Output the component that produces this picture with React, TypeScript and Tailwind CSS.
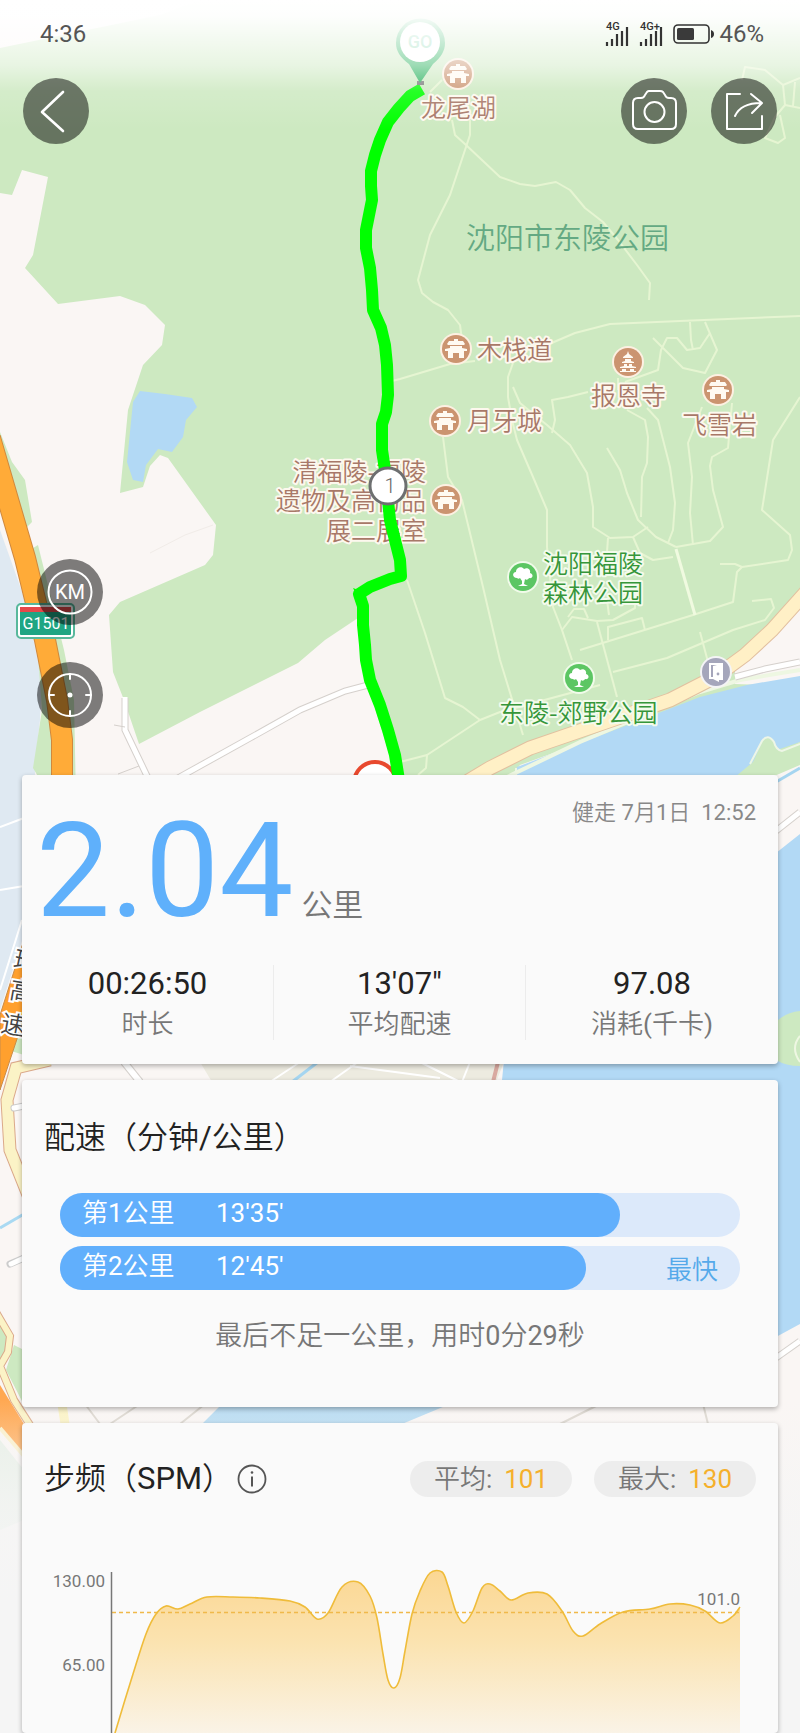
import type { ReactNode } from "react";

type Point = [number, number];

const splits = [
  { name: "第1公里", pace: "13'35'", ratio: 82.4, fastest: false },
  { name: "第2公里", pace: "12'45'", ratio: 77.3, fastest: true },
];

const stats = [
  { value: "00:26:50", label: "时长" },
  { value: "13'07\"", label: "平均配速" },
  { value: "97.08", label: "消耗(千卡)" },
];

const cadence: Point[] = [
  [111, 1748], [115, 1732], [133, 1673], [146, 1633], [156, 1613], [166, 1605],
  [178, 1608], [190, 1603], [207, 1596], [233, 1596], [260, 1597], [290, 1600],
  [305, 1606], [317, 1618], [328, 1612], [342, 1586], [358, 1581], [370, 1595],
  [377, 1617], [383, 1653], [388, 1679], [394, 1687], [400, 1677], [405, 1650],
  [412, 1613], [420, 1590], [430, 1572], [442, 1571], [448, 1585], [456, 1611],
  [464, 1622], [473, 1610], [482, 1587], [490, 1583], [500, 1590], [511, 1599],
  [528, 1592], [547, 1593], [562, 1610], [573, 1630], [583, 1635], [600, 1623],
  [623, 1611], [650, 1608], [670, 1603], [690, 1604], [705, 1610], [720, 1622],
  [733, 1615], [740, 1606],
];

const trails = [
  "M452 120L455 135L466 145L500 177L520 184L535 186L556 182L570 190L585 208L603 222L618 240L637 265L650 283L649 300",
  "M470 120L470 135L460 165L450 195L430 235L418 280L422 293L433 302L448 310L460 325L462 340",
  "M388 382L400 379L450 364L475 361M540 348L575 333L610 324L680 321L800 316",
  "M513 363L508 377L508 397L512 420L517 440L533 477L547 510L547 547L553 607L562 630L572 660",
  "M513 387L520 403L547 425L570 445L587 473L593 507L593 527L610 538L633 537L648 527",
  "M552 433L555 420L552 400L568 397L588 392",
  "M627 410L645 420L648 437L647 463L642 477L641 517",
  "M647 408L658 420L670 467L675 503L673 530L668 543",
  "M607 448L620 470L627 493L638 520L656 537L676 547",
  "M702 407L688 443L692 477L690 513L693 545",
  "M732 403L728 448L712 457L710 466L713 490L723 527L710 541L676 547",
  "M800 397L773 440L762 510L790 535L792 550L788 560L742 567L737 572L733 602L693 615L580 650M742 567L735 564L720 564",
  "M597 622L617 697",
  "M613 672L667 658L733 630L765 620L774 608L771 599L752 601",
  "M562 630L572 617L597 621L613 620L635 608L635 595M568 617L574 609L584 609L588 618",
  "M608 640L608 627L642 618L645 630M608 538L607 552M607 600L609 615",
  "M633 537L640 553L653 560L673 557",
  "M443 437L448 477L462 500L483 587L500 660L523 735",
  "M407 580L425 633L445 698L463 707L480 720",
  "M400 762L427 755L480 720L500 712L600 685M427 755L426 768L418 775",
  "M690 322L691 340L693 350M705 322L717 350L705 373L683 368L653 338M625 382L658 370L661 350L667 338L677 338L687 350L700 348L710 333",
  "M430 92L442 80M618 378L618 390M700 632L708 662",
  "M742 80L745 67L765 70L783 85L785 105L775 117L765 138L778 143L785 138L780 115M783 85L800 78M785 105L800 108M795 82L793 106",
];

const route =
  "M422 89L410 96L399 108L388 122L380 140L375 155L371 171L371 186L372 200L369 215L366 230L366 248L370 268L372 290L373 310L381 328L385 345L387 365L388 395L386 412L382 424L382 450L385 470L388 500L390 520L395 540L400 560L401 576L390 579L370 587L359 594L363 606L363 625L365 645L366 660L370 680L380 705L388 730L395 755L399 780";

function smooth(points: Point[]) {
  let d = `M${points[0][0]} ${points[0][1]}`;
  for (let i = 0; i < points.length - 1; i++) {
    const p0 = points[i - 1] ?? points[i];
    const p1 = points[i];
    const p2 = points[i + 1];
    const p3 = points[i + 2] ?? p2;
    d += `C${p1[0] + (p2[0] - p0[0]) / 6} ${p1[1] + (p2[1] - p0[1]) / 6} ${p2[0] - (p3[0] - p1[0]) / 6} ${p2[1] - (p3[1] - p1[1]) / 6} ${p2[0]} ${p2[1]}`;
  }
  return d;
}

function Gate({ x, y }: { x: number; y: number }) {
  return (
    <g transform={`translate(${x} ${y})`}>
      <circle r="16" fill="#fdf0e2" />
      <circle r="14" fill="#cb9470" />
      <path
        d="M-2 -10H2V-8H7L9 -5L8 -4H-8L-9 -5L-7 -8H-2ZM-6 -3H6V-1L11 0V2H8V9H3V4H-3V9H-8V2H-11V0L-6 -1Z"
        fill="#fffaf2"
      />
    </g>
  );
}

function Pagoda({ x, y }: { x: number; y: number }) {
  return (
    <g transform={`translate(${x} ${y})`}>
      <circle r="16" fill="#fdf0e2" />
      <circle r="14" fill="#cb9470" />
      <path
        d="M0 -11L1 -8L5 -5V-4H-5V-5L-1 -8ZM-3 -3H3V-1L6 0V1H-6V0L-3 -1ZM-4 2H-1V4H1V2H4V4L8 5V6H-8V5L-4 4ZM-6 7H-2V9H2V7H6V9H8V10H-8V9H-6Z"
        fill="#fffaf2"
      />
    </g>
  );
}

function Tree({ x, y }: { x: number; y: number }) {
  return (
    <g transform={`translate(${x} ${y})`}>
      <circle r="16" fill="#f1fbea" />
      <circle r="14" fill="#5cc663" />
      <path
        d="M-6 1C-11 1 -11 -5 -7 -5C-7 -10 -1 -11 1 -8C5 -10 8 -7 7 -4C11 -3 10 2 6 1C5 3 3 3 2 2L1 7L5 9H-5L-1 7V4L-3 1C-4 2 -5 2 -6 1Z"
        fill="#fff"
      />
    </g>
  );
}

function MapBackground() {
  return (
    <svg
      className="absolute inset-0 h-full w-full"
      viewBox="0 0 800 1733"
      preserveAspectRatio="xMidYMin slice"
      aria-hidden="true"
    >
      <defs>
        <linearGradient id="top-fade" x1="0" y1="0" x2="0" y2="1">
          <stop offset="0" stopColor="#fff" />
          <stop offset="0.12" stopColor="#fff" stopOpacity="0.97" />
          <stop offset="0.5" stopColor="#fff" stopOpacity="0.55" />
          <stop offset="0.7" stopColor="#fff" stopOpacity="0.15" />
          <stop offset="1" stopColor="#fff" stopOpacity="0" />
        </linearGradient>
        <linearGradient id="bottom-fade" x1="0" y1="0" x2="0" y2="1">
          <stop offset="0" stopColor="#f5f5f5" stopOpacity="0" />
          <stop offset="0.5" stopColor="#f5f5f5" stopOpacity="0.7" />
          <stop offset="1" stopColor="#f5f5f5" />
        </linearGradient>
      </defs>

      <rect width="800" height="1733" fill="#faf6f4" />

      {/* park */}
      <path
        d="M0 48L160 15L200 0H800V680L700 700L520 765L500 790H399L385 740L366 680L358 618L325 640L298 663L200 712L139 744L124 700L113 672L109 615L120 602L205 565L213 555L216 525L168 458L160 455L150 466L143 487L120 493L128 410L143 365L162 345L165 325L145 305L120 296L58 304L25 268L33 255L48 177L22 170L12 195L0 193Z"
        fill="#cde9c1"
      />
      <path d="M140 391L165 394L192 398L197 407L186 420L183 437L172 452L158 449L146 465L143 482L133 480L127 462L133 402Z" fill="#b2d9f5" />
      <path d="M213 525L185 535L150 553" stroke="#f1ece8" fill="none" />

      {/* ring highway and its verges */}
      <path d="M0 530L25 600L42 680L40 720L35 765V900L0 1010Z" fill="#dfe9f2" />
      <path d="M0 432L12 462L25 480L32 522L26 528L0 470ZM30 550L38 545L64 650L74 700L76 800H52L33 768L42 710Z" fill="#cde9c1" />
      <path d="M-10 438L25 558L45 640L57 700L62 740V800" stroke="#d0883e" strokeWidth="22" fill="none" />
      <path d="M-10 438L25 558L45 640L57 700L62 740V800" stroke="#ffab38" strokeWidth="20" fill="none" />
      <path d="M0 827L24 818M0 890L24 886M22 920L0 990" stroke="#fff" strokeWidth="2" fill="none" />
      <path d="M24 1010L8 1050L24 1055Z" fill="#cde9c1" />
      <path d="M24 940L0 1015V1090L24 1018Z" fill="#ffa02e" stroke="#c98c4a" />
      <g fontSize="25" fill="#444" stroke="#fff" strokeWidth="4" paintOrder="stroke">
        <text x="14" y="969" transform="rotate(12 20 960)">环</text>
        <text x="10" y="1000" transform="rotate(10 20 990)">高</text>
        <text x="1" y="1034" transform="rotate(10 14 1025)">速</text>
      </g>

      {/* ordinary roads */}
      <path d="M178 778L250 738L300 710L345 691L372 684M125 698V730L148 778" stroke="#d5d0cc" strokeWidth="7" fill="none" />
      <path d="M178 778L250 738L300 710L345 691L372 684M125 697V730L148 778" stroke="#fff" strokeWidth="5" fill="none" />
      <path d="M118 774L139 766M114 725L125 727" stroke="#d5d0cc" fill="none" />
      <path d="M50 1060L16 1068L7 1100L10 1150L30 1200" stroke="#dba98a" strokeWidth="13" fill="none" />
      <path d="M50 1060L16 1068L7 1100L10 1150L30 1200" stroke="#fbf3c6" strokeWidth="11" fill="none" />
      <path d="M14 1108L24 1106M10 1264L24 1258" stroke="#ccc" strokeWidth="7" strokeLinecap="round" />
      <path d="M14 1108L24 1106M11 1264L24 1258" stroke="#fff" strokeWidth="5" strokeLinecap="round" />
      <path d="M0 1228L24 1214" stroke="#a9d9f2" strokeWidth="3" />
      <path d="M0 1322L10 1345L0 1362ZM14 1345L24 1350V1405L6 1370Z" fill="#cde9c1" />
      <path d="M-4 1312L10 1336L8 1352L0 1366L14 1400L30 1425" stroke="#dba98a" strokeWidth="8" fill="none" />
      <path d="M-4 1312L10 1336L8 1352L0 1366L14 1400L30 1425" stroke="#fbf3c6" strokeWidth="6" fill="none" />
      <path d="M0 1385L24 1424V1455L0 1430Z" fill="#ffa852" />
      <path d="M0 1428L24 1456" stroke="#fbf0c8" strokeWidth="4" />
      <path d="M0 1440L24 1470V1520L0 1530Z" fill="#e7efe6" />

      <g fill="none" stroke="#e6f5d2" strokeWidth="2" strokeLinejoin="round">
        {trails.map((d) => (
          <path key={d} d={d} />
        ))}
      </g>
      <path d="M676 549L695 615" stroke="#f0fae0" strokeWidth="3" />

      {/* river and the east bank */}
      <path d="M735 668L800 608V686L735 684Z" fill="#faf6f4" />
      <path d="M505 790L517 767L633 723L700 697L747 685L800 676V742L735 778V800H505Z" fill="#b2d9f5" />
      <path d="M735 777L753 762L763 740Q768 735 774 742L777 750L800 742V765L765 780Z" fill="#cde9c1" />
      <path d="M750 764L762 741Q768 733 774 742Q776 750 782 751L800 744M516 778V768" fill="none" stroke="#eef6e6" strokeWidth="2" />
      <path d="M505 778L580 742L700 692L740 680L800 670" fill="none" stroke="#eef7e2" strokeWidth="4" />
      <path d="M735 677L765 669L800 662" stroke="#d5d0cc" strokeWidth="7" fill="none" />
      <path d="M735 677L765 669L800 662" stroke="#fff" strokeWidth="5" fill="none" />
      <path d="M460 786L490 768L530 748L600 724L670 700L715 677L745 655L772 630L806 592" stroke="#e2c0a0" strokeWidth="15" fill="none" />
      <path d="M460 786L490 768L530 748L600 724L670 700L715 677L745 655L772 630L806 592" stroke="#fff0c6" strokeWidth="13" fill="none" />
      <path d="M776 782L800 768" stroke="#a5d5f0" strokeWidth="3" />
      <path d="M776 831L800 812" stroke="#d5d0cc" strokeWidth="7" />
      <path d="M776 831L800 812" stroke="#fff" strokeWidth="5" />
      <path d="M504 1060L776 1060V853L800 834V1324L776 1337V1100H500Z" fill="#b2d9f5" />
      <path d="M776 1022Q786 1012 800 1011V1066Q786 1066 776 1060Z" fill="#cde9c1" />
      <path d="M800 1036Q790 1048 800 1062" stroke="#eef7e2" strokeWidth="2" fill="none" />
      <path d="M776 1358L800 1341" stroke="#d5d0cc" strokeWidth="7" />
      <path d="M776 1358L800 1341" stroke="#fff" strokeWidth="5" />

      {/* what shows between the cards */}
      <path d="M200 1062H504L496 1082H212Z" fill="#edebe0" />
      <path d="M270 1082L300 1062M330 1082L358 1062M350 1066L440 1078M420 1062L460 1082M470 1062L462 1082" stroke="#fff" strokeWidth="2" />
      <path d="M292 1082L318 1062" stroke="#a5d5f0" strokeWidth="3" />
      <path d="M124 1062L140 1082" stroke="#d5d0cc" strokeWidth="8" />
      <path d="M124 1062L140 1082" stroke="#fff" strokeWidth="6" />
      <path d="M498 1062L493 1082" stroke="#d9a9a0" strokeWidth="4" />
      <path d="M222 1404H450L402 1424H202Z" fill="#b9dcf2" />
      <path d="M62 1404L65 1424" stroke="#fbf3c6" strokeWidth="9" />
      <path d="M85 1404L100 1424M110 1424L140 1404M180 1424L205 1404M560 1424L600 1404M703 1404L708 1424" stroke="#ddd8d0" strokeWidth="2" />

      {/* place names */}
      <g className="font-['Noto_Sans_CJK_SC_DemiLight','Noto_Sans_CJK_SC',sans-serif]" strokeLinejoin="round" fontSize="25">
        <g fill="#a87868" stroke="#fdf8ee" strokeWidth="4" paintOrder="stroke">
          <text x="421" y="117">龙尾湖</text>
          <text x="477" y="359">木栈道</text>
          <text x="591" y="405">报恩寺</text>
          <text x="682" y="434">飞雪岩</text>
          <text x="467" y="430">月牙城</text>
          <g textAnchor="end">
            <text x="426" y="481">清福陵-福陵</text>
            <text x="426" y="510">遗物及高仿品</text>
            <text x="426" y="540">展二展室</text>
          </g>
        </g>
        <text x="466" y="249" fontSize="29" fill="#64a983">沈阳市东陵公园</text>
        <g fill="#36963a" stroke="#f3fbec" strokeWidth="4" paintOrder="stroke">
          <text x="543" y="573">沈阳福陵</text>
          <text x="543" y="602">森林公园</text>
          <text x="499" y="722">东陵-郊野公园</text>
        </g>
      </g>
      <Gate x={458} y={74} />
      <Gate x={456} y={349} />
      <Gate x={718} y={390} />
      <Gate x={445} y={421} />
      <Gate x={446} y={500} />
      <Pagoda x={628} y={362} />
      <Tree x={523} y={577} />
      <Tree x={579} y={678} />
      <g transform="translate(716 672)">
        <circle r="16" fill="#f4f4f6" />
        <circle r="14" fill="#a5a6bb" />
        <path d="M-7 -9H7V8H3V10L-3 7H-7ZM-5 -7V5H-3V-6L1 -7Z" fill="#fff" fillRule="evenodd" />
        <circle cx="2" cy="2" r="1.4" fill="#a5a6bb" />
      </g>
      <rect x="17" y="604" width="57" height="34" rx="4" fill="#1fa583" stroke="#58b89c" strokeWidth="2" />
      <rect x="19" y="606" width="53" height="30" rx="2" fill="#1fa583" stroke="#fff" strokeWidth="2" />
      <rect x="20" y="607" width="51" height="5" fill="#e5484a" />
      <text x="46" y="629" fontSize="16" textAnchor="middle" fill="#fff">G1501</text>

      {/* finish, route, kilometre mark, start */}
      <circle cx="375" cy="783" r="21" fill="#fff" stroke="#e8492e" strokeWidth="4" />
      <path d={route} fill="none" stroke="#00ff00" strokeWidth="12" strokeLinejoin="round" />
      <path d="M353 588L364 592L360 602Z" fill="#00ff00" />
      <circle cx="388" cy="486" r="18" fill="#fff" stroke="#6d6f70" strokeWidth="3" />
      <text x="390" y="493" fontSize="20" textAnchor="middle" fill="#666" fontWeight="300">1</text>
      <path d="M417 81H424V85H417Z" fill="#777" />
      <path d="M420 83L409 64C400 57 396 51 396 43A24.500 24.500 0 0 1 445 43C445 51 441 57 433 64Z" fill="#28b15c" />
      <circle cx="420" cy="42" r="20" fill="#fff" />
      <text x="420" y="48" fontSize="18" fontWeight="500" textAnchor="middle" fill="#8fd8b4">GO</text>

      <rect width="800" height="130" fill="url(#top-fade)" />
      <rect y="1400" width="800" height="200" fill="url(#bottom-fade)" />
      <rect y="1600" width="800" height="133" fill="#f5f5f5" />
    </svg>
  );
}

function Signal({ label }: { label: string }) {
  return (
    <svg width="26" height="28" viewBox="0 0 26 28" aria-label={label}>
      <text x="1" y="10" fontSize="11" fontWeight="500" fill="#333">{label}</text>
      <path d="M2 22V26M7 19V26M12 14V26M17 11V26M22 7V26" stroke="#333" strokeWidth="2.200" />
    </svg>
  );
}

function StatusBar() {
  return (
    <div className="flex h-[68px] items-center justify-between pr-9 pl-10 text-2xl text-[#555]">
      <span>4:36</span>
      <div className="flex items-center gap-1">
        <div className="flex gap-2 pr-1">
          <Signal label="4G" />
          <Signal label="4G+" />
        </div>
        <svg width="42" height="20" viewBox="0 0 42 20" aria-label="电量">
          <rect x="1" y="1" width="35" height="18" rx="4" fill="none" stroke="#333" strokeWidth="1.600" />
          <rect x="4" y="4" width="17" height="12" rx="1.500" fill="#3a3a3a" />
          <path d="M38 6Q41 7 41 10T38 14Z" fill="#333" />
        </svg>
        <span>46%</span>
      </div>
    </div>
  );
}

function RoundButton({ label, children }: { label: string; children: ReactNode }) {
  return (
    <button
      type="button"
      aria-label={label}
      className="flex size-[66px] items-center justify-center rounded-full bg-black/50"
    >
      <svg
        width="66"
        height="66"
        viewBox="0 0 66 66"
        fill="none"
        stroke="#fff"
        strokeWidth="2"
        strokeLinejoin="round"
        strokeLinecap="round"
      >
        {children}
      </svg>
    </button>
  );
}

function Card({ className, children }: { className: string; children: ReactNode }) {
  return (
    <section className={`rounded bg-[#fafafa] shadow-[0_2px_5px_rgba(0,0,0,0.3)] ${className}`}>
      {children}
    </section>
  );
}

function Summary() {
  return (
    <Card className="pt-5 pb-6">
      <div className="flex items-start justify-between pr-[22px] pl-[14px]">
        <p className="mt-4 flex items-baseline gap-2">
          <span className="text-[132px] leading-[120px] text-[#5fb0fb]">2.04</span>
          <span className="text-[31px] leading-8 text-[#777]">公里</span>
        </p>
        <p className="text-[22px] leading-9 whitespace-pre text-[#888]">健走 7月1日  12:52</p>
      </div>
      <dl className="mt-[34px] grid grid-cols-3 divide-x divide-[#ececec]">
        {stats.map((stat) => (
          <div key={stat.label} className="flex h-[75px] flex-col-reverse text-center">
            <dt className="text-[26px] leading-8 text-[#777]">{stat.label}</dt>
            <dd className="pb-1 text-[31px] leading-10 text-[#222]">{stat.value}</dd>
          </div>
        ))}
      </dl>
    </Card>
  );
}

function Pace() {
  return (
    <Card className="px-[22px] pt-[38px] pb-[51px]">
      <h2 className="text-[31px] leading-10 text-[#222]">配速（分钟/公里）</h2>
      <ul className="mt-[35px] flex flex-col gap-[9px] px-4 text-[26px] leading-10 text-white">
        {splits.map((split) => (
          <li key={split.name} className="relative h-11 rounded-full bg-[#dce9fa]">
            <div
              className="flex h-full rounded-full bg-[#61affc] pl-[22px]"
              style={{ width: `${split.ratio}%` }}
            >
              <span className="w-[134px]">{split.name}</span>
              <span>{split.pace}</span>
            </div>
            {split.fastest && (
              <span className="absolute top-1 right-[22px] text-[#55a9ea]">最快</span>
            )}
          </li>
        ))}
      </ul>
      <p className="mt-[26px] text-center text-[27px] leading-10 text-[#777]">
        最后不足一公里，用时0分29秒
      </p>
    </Card>
  );
}

function Pill({ label, value }: { label: string; value: string }) {
  return (
    <p className="flex h-9 w-[162px] items-center justify-center gap-3 rounded-full bg-[#ededed] text-[26px] text-[#777]">
      {label}:<span className="text-[#f5b02c]">{value}</span>
    </p>
  );
}

function Cadence() {
  const line = smooth(cadence);

  return (
    <Card className="min-h-0 flex-1 pt-9">
      <div className="flex items-center px-[22px]">
        <h2 className="text-[31px] leading-10 text-[#222]">步频（SPM）</h2>
        <button type="button" aria-label="步频说明" className="ml-1">
          <svg width="30" height="30" viewBox="0 0 30 30" fill="none" stroke="#555" strokeWidth="1.800">
            <circle cx="15" cy="15" r="13.500" />
            <path d="M15 12.500V22.500" strokeWidth="2" />
            <circle cx="15" cy="8.500" r="1.300" fill="#555" stroke="none" />
          </svg>
        </button>
        <div className="ml-auto flex gap-[22px]">
          <Pill label="平均" value="101" />
          <Pill label="最大" value="130" />
        </div>
      </div>
      <svg className="mt-[52px] w-full" viewBox="22 1550 756 230" role="img" aria-label="步频曲线">
        <defs>
          <linearGradient id="cadence-fill" gradientUnits="userSpaceOnUse" x1="0" y1="1570" x2="0" y2="1748">
            <stop offset="0" stopColor="#fbd793" />
            <stop offset="0.4" stopColor="#fbe3b0" />
            <stop offset="1" stopColor="#faf6f0" />
          </linearGradient>
        </defs>
        <path d={`${line}V1748H111Z`} fill="url(#cadence-fill)" />
        <path d="M112 1611.500H740" stroke="#f0b94a" strokeWidth="1.400" strokeDasharray="4 3" />
        <path d={line} fill="none" stroke="#efbc3a" strokeWidth="1.600" />
        <path d="M111.500 1571V1748" stroke="#777" strokeWidth="1.500" />
        <g fontSize="17" fill="#777" textAnchor="end">
          <text x="105" y="1586">130.00</text>
          <text x="105" y="1670">65.00</text>
          <text x="740" y="1604">101.0</text>
        </g>
      </svg>
    </Card>
  );
}

export default function App() {
  return (
    <main
      lang="zh-CN"
      className="relative h-screen overflow-hidden bg-[#f5f5f5] font-[Roboto,'Noto_Sans_CJK_SC_DemiLight','Noto_Sans_CJK_SC',sans-serif]"
    >
      <MapBackground />
      <div className="relative flex h-full flex-col">
        <StatusBar />
        <nav className="mt-[10px] flex justify-between px-[23px]">
          <RoundButton label="返回">
            <path d="M40 14L19 34L40 53" strokeWidth="2.600" />
          </RoundButton>
          <div className="flex gap-6">
            <RoundButton label="拍照">
              <path d="M17 20H20Q23 20 24 17L26 14Q27 13 28 13H39Q41 13 42 14L44 17Q45 20 48 20H50Q55 20 55 25V46Q55 51 50 51H17Q12 51 12 46V25Q12 20 17 20Z" />
              <circle cx="33.500" cy="34" r="10" />
            </RoundButton>
            <RoundButton label="分享">
              <path d="M29 16H16V51H51V38" />
              <path d="M24 38Q30 25 50 25M40 16L51 25L41 35" />
            </RoundButton>
          </div>
        </nav>
        <div className="mt-[415px] mb-[47px] flex flex-col gap-[37px] pl-[37px]">
          <RoundButton label="公里标记">
            <circle cx="33" cy="33" r="21.500" />
            <text x="33" y="40" fontSize="20" textAnchor="middle" fill="#fff" stroke="none">KM</text>
          </RoundButton>
          <RoundButton label="定位">
            <circle cx="33" cy="33" r="21" />
            <path d="M33 12V17M33 49V54M12 33H17M49 33H54" />
            <circle cx="33" cy="33" r="2.500" fill="#fff" stroke="none" />
          </RoundButton>
        </div>
        <div className="flex min-h-0 flex-1 flex-col gap-4 px-[22px]">
          <Summary />
          <Pace />
          <Cadence />
        </div>
      </div>
    </main>
  );
}
